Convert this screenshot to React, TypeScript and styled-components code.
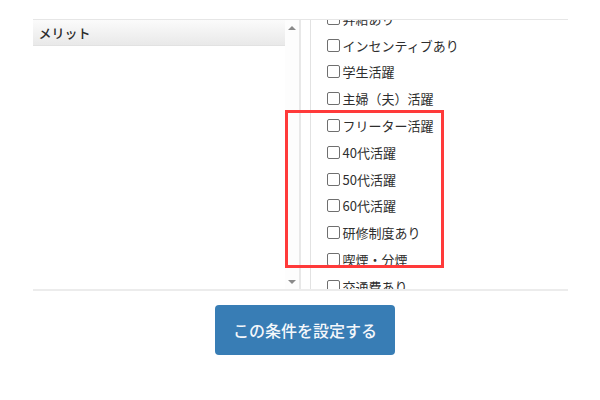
import styled, { createGlobalStyle } from "styled-components";

const GlobalStyle = createGlobalStyle`
  html, body {
    margin: 0;
    padding: 0;
    background: #fff;
  }
  body {
    font-family: "Noto Sans CJK JP", "Noto Sans", sans-serif;
    color: #333;
  }
`;

const Page = styled.div`
  width: 600px;
  height: 400px;
  padding-top: 19px;
  box-sizing: border-box;
  display: flex;
  flex-direction: column;
  align-items: center;
`;

const Panel = styled.div`
  position: relative;
  width: 535px;
  height: 272px;
  box-sizing: border-box;
  border-top: 1px solid #e6e6e6;
  border-bottom: 2px solid #ececec;
  display: grid;
  grid-template-columns: 268px 1fr;
  column-gap: 9px;
`;

const ListBox = styled.div`
  display: flex;
  border-right: 2px solid #e8e8e8;
  min-height: 0;
`;

const ListArea = styled.div`
  flex: 1;
`;

const GroupHeader = styled.div`
  height: 25px;
  display: flex;
  align-items: center;
  padding-left: 6px;
  font-size: 13px;
  font-weight: 500;
  color: #2b2b2b;
  background: linear-gradient(#fbfbfb, #e9e9e9);
  border-bottom: 1px solid #e2e2e2;
`;

const Scrollbar = styled.div`
  width: 14px;
  display: flex;
  flex-direction: column;
  justify-content: space-between;
  align-items: center;
  padding: 6px 0 5px;
  background: #fdfdfd;
`;

const Arrow = styled.span<{ $down?: boolean }>`
  width: 0;
  height: 0;
  border-left: 4px solid transparent;
  border-right: 4px solid transparent;
  ${({ $down }) =>
    $down ? "border-top: 4px solid #8a8a8a;" : "border-bottom: 4px solid #8a8a8a;"}
`;

const OptionPane = styled.div`
  border-left: 1px solid #e2e2e2;
  overflow: hidden;
`;

const OptionList = styled.ul`
  list-style: none;
  margin: -15px 0 0;
  padding: 0 0 0 16px;
`;

const OptionRow = styled.li`
  height: 26.8px;
  display: flex;
  align-items: center;
`;

const OptionLabel = styled.label`
  display: flex;
  align-items: center;
  gap: 3px;
  font-size: 13px;
  color: #2e2e2e;
  cursor: pointer;
`;

const Check = styled.input`
  appearance: none;
  margin: 0;
  width: 13px;
  height: 13px;
  border: 1px solid #6f6f6f;
  border-radius: 2px;
  background: #fff;
  box-sizing: border-box;
`;

const Highlight = styled.div`
  position: absolute;
  left: 252px;
  top: 90px;
  width: 159px;
  height: 158px;
  box-sizing: border-box;
  border: 3px solid #ff3a3a;
  pointer-events: none;
`;

const Footer = styled.div`
  margin-top: 14px;
  padding-left: 10px;
  display: flex;
  justify-content: center;
`;

const SubmitButton = styled.button`
  width: 180px;
  height: 50px;
  border: none;
  border-radius: 4px;
  background: #387db5;
  color: #f4f7fb;
  font-family: "Noto Sans CJK JP", "Noto Sans", sans-serif;
  font-size: 16px;
  font-weight: 500;
  cursor: pointer;
`;

const options = [
  "昇給あり",
  "インセンティブあり",
  "学生活躍",
  "主婦（夫）活躍",
  "フリーター活躍",
  "40代活躍",
  "50代活躍",
  "60代活躍",
  "研修制度あり",
  "喫煙・分煙",
  "交通費あり",
];

export default function App() {
  return (
    <>
      <GlobalStyle />
      <Page>
        <Panel>
          <ListBox>
            <ListArea>
              <GroupHeader>メリット</GroupHeader>
            </ListArea>
            <Scrollbar>
              <Arrow />
              <Arrow $down />
            </Scrollbar>
          </ListBox>
          <OptionPane>
            <OptionList>
              {options.map((name) => (
                <OptionRow key={name}>
                  <OptionLabel>
                    <Check type="checkbox" />
                    {name}
                  </OptionLabel>
                </OptionRow>
              ))}
            </OptionList>
          </OptionPane>
          <Highlight />
        </Panel>
        <Footer>
          <SubmitButton type="button">この条件を設定する</SubmitButton>
        </Footer>
      </Page>
    </>
  );
}
